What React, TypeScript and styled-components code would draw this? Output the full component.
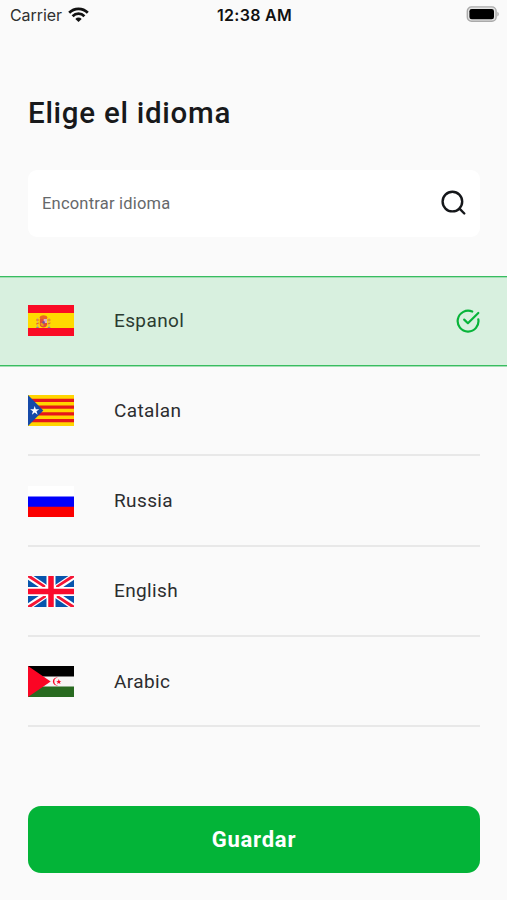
import React, { useState } from "react";
import styled, { createGlobalStyle } from "styled-components";

const GlobalStyle = createGlobalStyle`
  *, *::before, *::after { box-sizing: border-box; }
  body { margin: 0; background: #fafafa; }
`;

const Screen = styled.main`
  display: flex;
  flex-direction: column;
  width: 507px;
  height: 900px;
  overflow: hidden;
  background: #fafafa;
  color: #18191b;
  font-family: Roboto, "Liberation Sans", sans-serif;
`;

const StatusBar = styled.header`
  display: grid;
  grid-template-columns: 1fr auto 1fr;
  align-items: center;
  height: 30px;
  padding: 0 8px 0 10px;
  font-family: Inter, sans-serif;
  font-size: 16px;
  line-height: 30px;
  color: #111;
`;

const Carrier = styled.div`
  display: flex;
  align-items: center;
  gap: 6px;
  letter-spacing: -0.08px;
  color: #303030;
`;

const Clock = styled.div`
  font-weight: 600;
  letter-spacing: 0.28px;
`;

const Battery = styled.div`
  display: flex;
  justify-content: flex-end;
  svg { display: block; margin-top: -2px; }
`;

const Title = styled.h1`
  margin: 64px 28px 0;
  height: 39px;
  font-size: 29.5px;
  line-height: 39px;
  font-weight: 500;
  letter-spacing: 0.72px;
  white-space: nowrap;
`;

const SearchField = styled.label`
  display: flex;
  align-items: center;
  justify-content: space-between;
  height: 67px;
  margin: 37px 27px 0 28px;
  padding: 0 13px 1px 14px;
  border-radius: 9px;
  background: #fff;
  svg { flex: none; margin-bottom: 1px; }
`;

const SearchInput = styled.input`
  width: 300px;
  padding: 1px 0 0;
  border: 0;
  outline: 0;
  background: transparent;
  font: 400 16.5px/24px Roboto, sans-serif;
  letter-spacing: 0.2px;
  color: #333;
  &::placeholder { color: #66686a; opacity: 1; }
`;

const LanguageList = styled.ul`
  margin: 39px 0 0;
  padding: 0;
  list-style: none;
`;

const LanguageItem = styled.li<{ $selected: boolean }>`
  height: 90.2px;
  padding: 0 27px 0 28px;
  background: ${(p) => (p.$selected ? "#d8f0df" : "transparent")};
  border-style: solid;
  border-width: ${(p) => (p.$selected ? "1px 0" : "0")};
  border-color: #38bd60;
  box-shadow: ${(p) => (p.$selected ? "inset 0 1px #a4dfb5, 0 1px #a4dfb5" : "none")};
`;

const LanguageButton = styled.button<{ $selected: boolean }>`
  display: flex;
  align-items: center;
  width: 100%;
  height: 100%;
  padding: ${(p) => (p.$selected ? "0 0 1px" : "1.4px 0 0")};
  border: 0;
  border-bottom: ${(p) => (p.$selected ? "0" : "2px solid #e8e8e8")};
  background: none;
  color: ${(p) => (p.$selected ? "#2b3b31" : "#2c2d2f")};
  text-align: left;
  cursor: pointer;
`;

const FlagArt = styled.svg`
  flex: none;
  display: block;
  width: 46px;
  height: 31px;
`;

const LanguageName = styled.span`
  flex: 1;
  margin-left: 40px;
  font: 400 19px/26px Roboto, sans-serif;
  letter-spacing: 0.38px;
`;

const SaveButton = styled.button`
  height: 67px;
  margin: auto 27px 27px 28px;
  padding: 0;
  border: 0;
  border-radius: 13px;
  background: #03b438;
  color: #fff;
  font: 700 22px/67px Roboto, sans-serif;
  letter-spacing: 0.75px;
  cursor: pointer;
`;

const SpainFlag = () => (
  <FlagArt viewBox="0 0 46 31">
    <path fill="#fa0b25" d="M0 0h46v31H0z" />
    <path fill="#ffda00" d="M0 8h46v15H0z" />
    <path d="M9.5 13v9M21 13v9" stroke="#dcae62" strokeWidth="1.2" />
    <path d="M8 15h3M8 19l3-1M19.5 15h3M19.5 19l3-1" stroke="#e76a29" strokeWidth="1" />
    <path d="M8.2 22.4h2.6M19.7 22.4h2.6" stroke="#70909f" strokeWidth="1" />
    <path d="M11.5 12.5c1-2.9 7-2.9 8 0l-1 2h-6z" fill="#ec6325" />
    <path d="M11.8 14H19v5.5c0 4-7.2 4-7.2 0z" fill="#e64c32" />
    <path d="M15.7 14H19v4h-3.3z" fill="#deb0c4" />
    <path d="M12.5 18h3v3.2c-2 0-3-1-3-3.2z" fill="#e9a015" />
    <circle cx="15.6" cy="17.4" r="1.3" fill="#78529a" />
  </FlagArt>
);

const CatalanFlag = () => (
  <FlagArt viewBox="0 0 46 31">
    <path fill="#ffd500" d="M0 0h46v31H0z" />
    <path stroke="#e5161c" strokeWidth="3.2" d="M0 5.3h46M0 12.1h46M0 18.9h46M0 25.7h46" />
    <path fill="#1549a8" d="M0 0l15.3 15.5L0 31z" />
    <path fill="#fff" d="M6.7 11l1.1 3.3h3.5l-2.8 2 1.1 3.4-2.9-2.1-2.8 2.1 1-3.4-2.8-2h3.5z" />
  </FlagArt>
);

const RussiaFlag = () => (
  <FlagArt viewBox="0 0 46 31">
    <path fill="#fff" d="M0 0h46v11H0z" />
    <path fill="#0000fb" d="M0 10.5h46V21H0z" />
    <path fill="#fb0000" d="M0 20.7h46V31H0z" />
  </FlagArt>
);

const EnglishFlag = () => (
  <FlagArt viewBox="0 0 46 31">
    <path fill="#0755ad" d="M0 0h46v31H0z" />
    <path stroke="#fff" strokeWidth="6.2" d="M0 0l46 31M46 0L0 31" />
    <path fill="#f51535" d="M0 0h3.3l14 9.5V11h-2.5L0 1.5zM46 0h-3.5L28 9.8V11h2.7L46 1.5zM0 31h3.5L18 21.2V20h-2.7L0 29.5zM46 31h-3.3l-14-9.5V20h2.5L46 29.5z" />
    <path stroke="#fff" strokeWidth="9" d="M23 0v31M0 15.5h46" />
    <path stroke="#fa0b2d" strokeWidth="5.5" d="M23 0v31M0 15.5h46" />
  </FlagArt>
);

const ArabicFlag = () => (
  <FlagArt viewBox="0 0 46 31">
    <path fill="#f5f5f5" d="M0 0h46v31H0z" />
    <path fill="#000" d="M0 0h46v10.5H0z" />
    <path fill="#286a20" d="M0 20.5h46V31H0z" />
    <path fill="#fb0524" d="M0 0l22.7 15.5L0 31z" />
    <path fill="#fb0524" d="M30 11.8a3.9 3.9 0 1 0 0 7.4 3 3 0 1 1 0-7.4zM30.8 13l.7 1.9 1.9.1-1.5 1.1.5 1.8-1.6-1-1.6 1 .5-1.8-1.5-1.1 1.9-.1z" />
  </FlagArt>
);

const languages = [
  { name: "Espanol", Flag: SpainFlag },
  { name: "Catalan", Flag: CatalanFlag },
  { name: "Russia", Flag: RussiaFlag },
  { name: "English", Flag: EnglishFlag },
  { name: "Arabic", Flag: ArabicFlag },
];

export default function App() {
  const [selected, setSelected] = useState("Espanol");
  return (
    <Screen>
      <GlobalStyle />
      <StatusBar>
        <Carrier>
          Carrier
          <svg width="21" height="16" viewBox="0 0 21 16" fill="none" stroke="#111" strokeWidth="2.7">
            <path d="M1.2 5.8c5.1-5.3 13.5-5.3 18.6 0" />
            <path d="M4.6 9.2c3.3-3.4 8.5-3.4 11.8 0" />
            <path d="M7.3 11.9c1.8-1.8 4.6-1.8 6.4 0l-3.2 3.2z" fill="#111" stroke="none" />
          </svg>
        </Carrier>
        <Clock>12:38 AM</Clock>
        <Battery>
          <svg width="34" height="18" viewBox="0 0 34 18">
            <rect x="2.3" y="1.9" width="28.8" height="14.4" rx="4.2" fill="#e4e4e4" stroke="#aaa" strokeWidth="1.4" />
            <rect x="4.4" y="4" width="24.6" height="10.2" rx="2.3" fill="#000" />
            <path d="M32.4 6.7c1.8.8 1.8 4 0 4.8z" fill="#aaa" />
          </svg>
        </Battery>
      </StatusBar>
      <Title>Elige el idioma</Title>
      <SearchField>
        <SearchInput placeholder="Encontrar idioma" />
        <svg width="27" height="27" viewBox="0 0 27 27" fill="none" stroke="#15171a" strokeWidth="2.4" strokeLinecap="round">
          <circle cx="12.4" cy="12.6" r="9.8" />
          <path d="M19.5 19.7l4.8 4.8" />
        </svg>
      </SearchField>
      <LanguageList>
        {languages.map(({ name, Flag }) => {
          const active = name === selected;
          return (
            <LanguageItem key={name} $selected={active}>
              <LanguageButton $selected={active} onClick={() => setSelected(name)}>
                <Flag />
                <LanguageName>{name}</LanguageName>
                {active && (
                  <svg width="24" height="24" viewBox="0 0 24 24" fill="none" stroke="#08b43a" strokeWidth="2.2" strokeLinecap="round" strokeLinejoin="round">
                    <path d="M22.3 10.3A10.4 10.4 0 1 1 16.2 2.6" />
                    <path d="M8.2 10.6l3.7 3.6L22.3 4" />
                  </svg>
                )}
              </LanguageButton>
            </LanguageItem>
          );
        })}
      </LanguageList>
      <SaveButton>Guardar</SaveButton>
    </Screen>
  );
}
